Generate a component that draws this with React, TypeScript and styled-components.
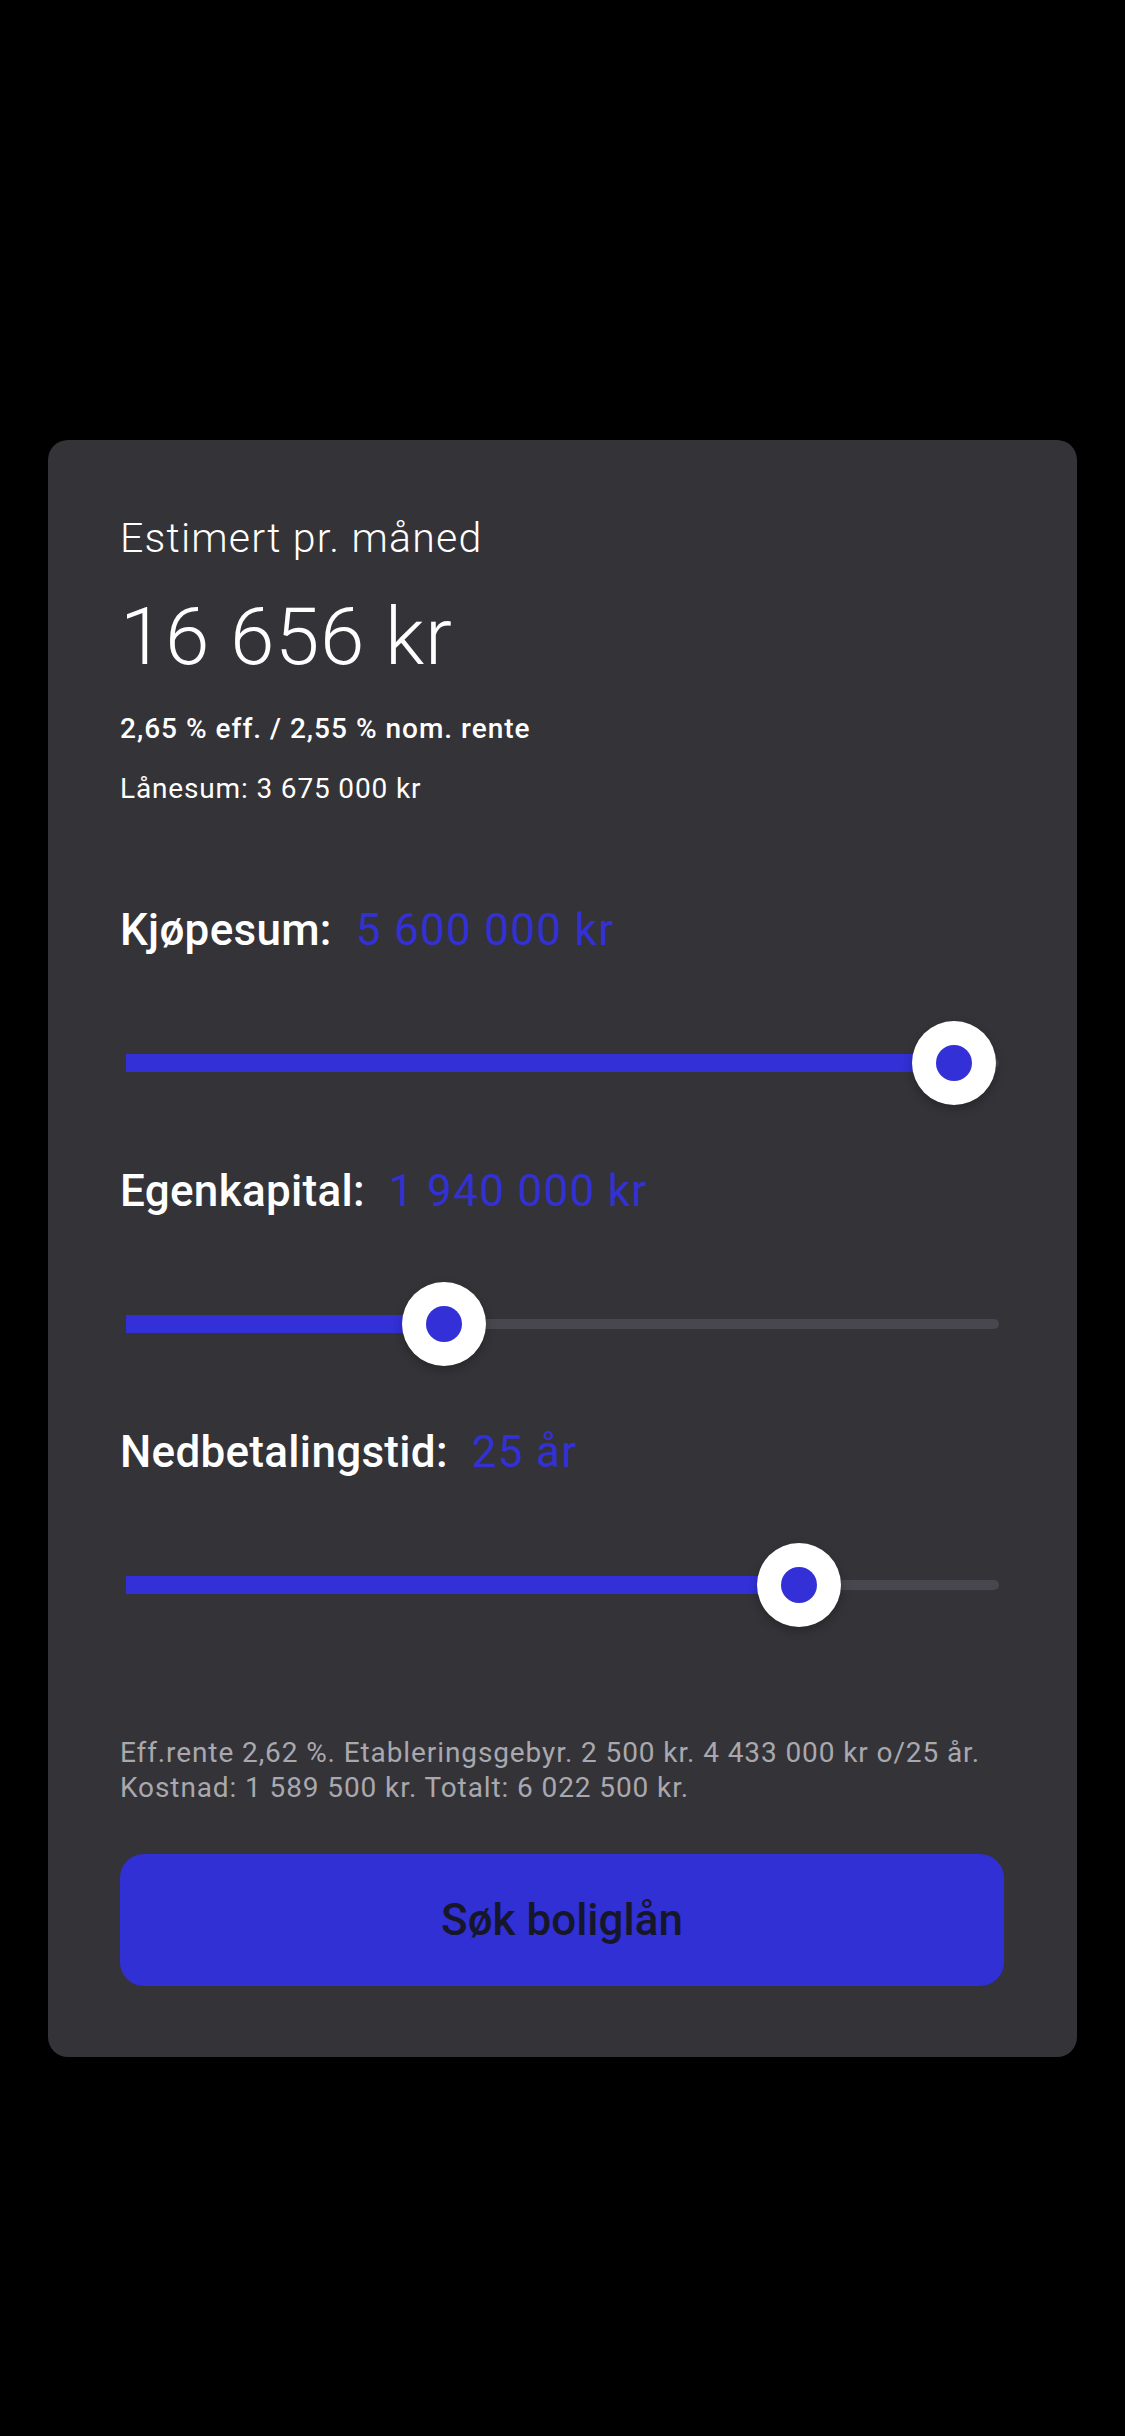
import styled, { createGlobalStyle } from 'styled-components';

const GlobalStyle = createGlobalStyle`
  body {
    margin: 0;
    background: #000;
    font-family: Roboto, "Liberation Sans", sans-serif;
  }
`;

const Page = styled.div`
  min-height: 2436px;
  background: #000;
  padding: 440px 48px 0;
  box-sizing: border-box;
`;

const Card = styled.div`
  background: #343338;
  border-radius: 20px;
  padding: 74px 73px 71px 72px;
  display: flex;
  flex-direction: column;
  color: #fff;
`;

const Caption = styled.p`
  margin: 0;
  font-size: 41px;
  line-height: 48px;
  font-weight: 300;
  letter-spacing: 1.2px;
`;

const Amount = styled.p`
  margin: 27px 0 0;
  font-size: 80px;
  line-height: 96px;
  font-weight: 300;
  letter-spacing: 0.6px;
`;

const Rate = styled.p`
  margin: 27px 0 0;
  font-size: 28px;
  line-height: 34px;
  font-weight: 500;
  letter-spacing: 1px;
`;

const Loan = styled.p`
  margin: 26px 0 0;
  font-size: 28px;
  line-height: 34px;
  font-weight: 400;
  letter-spacing: 0.85px;
`;

const Field = styled.div<{ $first?: boolean }>`
  margin-top: ${(p) => (p.$first ? '98px' : '60px')};
  display: flex;
  flex-direction: column;
  gap: 65px;
`;

const LabelRow = styled.div`
  display: flex;
  align-items: baseline;
  gap: 24px;
  font-size: 44px;
  line-height: 52px;
`;

const LabelName = styled.span`
  font-weight: 500;
  color: #fff;
  letter-spacing: 0.3px;
`;

const LabelValue = styled.span`
  font-weight: 400;
  color: #3331d4;
  letter-spacing: 1.3px;
`;

const SliderWrap = styled.div`
  position: relative;
  height: 84px;
  margin: 0 5px 0 6px;
`;

const Track = styled.div`
  position: absolute;
  left: 0;
  right: 0;
  top: 37px;
  height: 10px;
  border-radius: 5px;
  background: #48474f;
`;

const Fill = styled.div`
  position: absolute;
  left: 0;
  top: 33px;
  height: 18px;
  background: #3230d6;
`;

const Thumb = styled.div`
  position: absolute;
  top: 0;
  width: 84px;
  height: 84px;
  border-radius: 50%;
  background: #fff;
  box-shadow: 0 4px 10px rgba(0, 0, 0, 0.25);
  display: flex;
  align-items: center;
  justify-content: center;
`;

const ThumbDot = styled.div`
  width: 36px;
  height: 36px;
  border-radius: 50%;
  background: #3230d6;
`;

const Terms = styled.p`
  margin: 108px 0 0;
  font-size: 28px;
  line-height: 35px;
  font-weight: 400;
  color: #a9a8ae;
  letter-spacing: 0.9px;
`;

const ApplyButton = styled.button`
  margin-top: 49px;
  height: 132px;
  border: none;
  border-radius: 24px;
  background: #3130d4;
  color: #17172a;
  font-family: Roboto, "Liberation Sans", sans-serif;
  font-size: 44px;
  font-weight: 500;
  cursor: pointer;
`;

const TRACK_WIDTH = 873;
const THUMB = 84;

const Slider = ({ fraction }: { fraction: number }) => {
  const left = fraction * (TRACK_WIDTH - THUMB);
  return (
    <SliderWrap>
      <Track />
      <Fill style={{ width: left + THUMB / 2 }} />
      <Thumb style={{ left }}>
        <ThumbDot />
      </Thumb>
    </SliderWrap>
  );
};

const fields = [
  { name: 'Kjøpesum:', value: '5 600 000 kr', fraction: 0.996 },
  { name: 'Egenkapital:', value: '1 940 000 kr', fraction: 0.35 },
  { name: 'Nedbetalingstid:', value: '25 år', fraction: 0.8 },
];

const App = () => {
  return (
    <Page>
      <GlobalStyle />
      <Card>
        <Caption>Estimert pr. måned</Caption>
        <Amount>16 656 kr</Amount>
        <Rate>2,65 % eff. / 2,55 % nom. rente</Rate>
        <Loan>Lånesum: 3 675 000 kr</Loan>
        {fields.map((f, i) => (
          <Field key={f.name} $first={i === 0}>
            <LabelRow>
              <LabelName>{f.name}</LabelName>
              <LabelValue>{f.value}</LabelValue>
            </LabelRow>
            <Slider fraction={f.fraction} />
          </Field>
        ))}
        <Terms>
          Eff.rente 2,62 %. Etableringsgebyr. 2 500 kr. 4 433 000 kr o/25 år.
          <br />
          Kostnad: 1 589 500 kr. Totalt: 6 022 500 kr.
        </Terms>
        <ApplyButton>Søk boliglån</ApplyButton>
      </Card>
    </Page>
  );
};

export default App;
